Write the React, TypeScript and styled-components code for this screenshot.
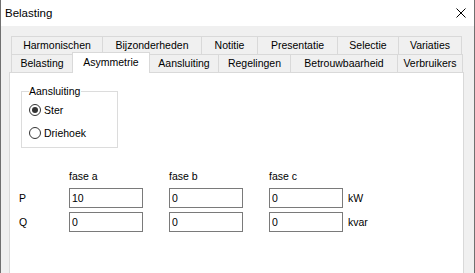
import { Fragment } from "react";
import styled, { createGlobalStyle } from "styled-components";

const Global = createGlobalStyle`
  body {
    margin: 0;
    background: #fff;
    font-family: "Liberation Sans", Arial, sans-serif;
    font-size: 10.5px;
    color: #000;
  }
`;

const Window = styled.div`
  width: 475px;
  height: 273px;
  box-sizing: border-box;
  border-left: 1px solid #707070;
  border-right: 1px solid #707070;
  display: flex;
  flex-direction: column;
  overflow: hidden;
`;

const TitleBar = styled.div`
  height: 26px;
  flex: none;
  background: #fff;
  display: flex;
  align-items: center;
  justify-content: space-between;
  padding: 0 8px 0 4px;
`;

const Title = styled.span`
  font-size: 11.5px;
  line-height: 14px;
`;

const Body = styled.div`
  flex: 1;
  min-height: 0;
  background: #f0f0f0;
  padding: 10px 10px 0 8px;
  display: flex;
  flex-direction: column;
`;

const TabStrip = styled.div`
  padding-left: 2px;
  display: flex;
  flex-direction: column;
`;

const TabRow = styled.div`
  display: flex;
  height: 18px;
  align-items: flex-end;
`;

const Tab = styled.div<{ $w: number; $last?: boolean; $active?: boolean }>`
  width: ${({ $w, $last, $active }) => $w + ($last || $active ? 1 : 0)}px;
  box-sizing: border-box;
  height: ${({ $active }) => ($active ? 21 : 18)}px;
  margin-bottom: ${({ $active }) => ($active ? -1 : 0)}px;
  margin-right: ${({ $active }) => ($active ? -1 : 0)}px;
  position: relative;
  z-index: ${({ $active }) => ($active ? 2 : 1)};
  background: ${({ $active }) => ($active ? "#fff" : "#f0f0f0")};
  border-top: 1px solid #d9d9d9;
  border-left: 1px solid #d9d9d9;
  border-right: ${({ $last, $active }) => ($last || $active ? "1px solid #d9d9d9" : "none")};
  display: flex;
  align-items: ${({ $active }) => ($active ? "flex-start" : "center")};
  padding-top: ${({ $active }) => ($active ? 3 : 0)}px;
  justify-content: center;
  line-height: 13px;
  white-space: nowrap;
`;

const Panel = styled.div`
  flex: 1;
  background: #fff;
  border: 1px solid #d9d9d9;
  border-bottom: none;
  padding: 12px 0 0 9px;
  display: flex;
  flex-direction: column;
  align-items: flex-start;
`;

const Group = styled.fieldset`
  width: 97px;
  box-sizing: border-box;
  margin: 0 0 0 2px;
  padding: 0 7px 6px;
  border: 1px solid #dcdcdc;
  min-width: 0;
`;

const Legend = styled.legend`
  padding: 0 1px 0 0;
  margin-left: 0;
  line-height: 13px;
`;

const RadioRow = styled.label<{ $first?: boolean }>`
  display: flex;
  align-items: center;
  gap: 3px;
  height: 16px;
  margin-top: ${({ $first }) => ($first ? 4 : 7)}px;
  line-height: 13px;
`;

const RadioDot = styled.span<{ $on?: boolean }>`
  width: 12px;
  height: 12px;
  box-sizing: border-box;
  border-radius: 50%;
  border: 1px solid #333;
  background: #fff;
  display: flex;
  align-items: center;
  justify-content: center;
  &::after {
    content: "";
    width: 6px;
    height: 6px;
    border-radius: 50%;
    background: ${({ $on }) => ($on ? "#333" : "transparent")};
  }
`;

const Grid = styled.div`
  margin-top: 21px;
  display: grid;
  grid-template-columns: 50px 100px 100px 79px auto;
  grid-template-rows: 15px 20px 20px;
  row-gap: 4px;
  align-items: center;
  line-height: 13px;
`;

const Field = styled.input`
  width: 74px;
  height: 20px;
  box-sizing: border-box;
  border: 1px solid #7a7a7a;
  padding: 0 2px;
  margin: 0;
  font: inherit;
  color: #000;
  background: #fff;
  outline: none;
`;

const topTabs: [string, number][] = [
  ["Harmonischen", 91],
  ["Bijzonderheden", 99],
  ["Notitie", 56],
  ["Presentatie", 80],
  ["Selectie", 61],
  ["Variaties", 63],
];

const bottomTabs: [string, number][] = [
  ["Belasting", 61],
  ["Asymmetrie", 77],
  ["Aansluiting", 69],
  ["Regelingen", 72],
  ["Betrouwbaarheid", 107],
  ["Verbruikers", 65],
];

const rows = [
  { label: "P", values: ["10", "0", "0"], unit: "kW" },
  { label: "Q", values: ["0", "0", "0"], unit: "kvar" },
];

export default function App() {
  return (
    <>
      <Global />
      <Window>
        <TitleBar>
          <Title>Belasting</Title>
          <svg width="10" height="10" viewBox="0 0 10 10">
            <path d="M0.5 0.5 L9.5 9.5 M9.5 0.5 L0.5 9.5" stroke="#000" strokeWidth="1" fill="none" />
          </svg>
        </TitleBar>
        <Body>
          <TabStrip>
            <TabRow>
              {topTabs.map(([t, w], i) => (
                <Tab key={t} $w={w} $last={i === topTabs.length - 1}>
                  {t}
                </Tab>
              ))}
            </TabRow>
            <TabRow>
              {bottomTabs.map(([t, w], i) => (
                <Tab
                  key={t}
                  $w={w}
                  $last={i === bottomTabs.length - 1}
                  $active={t === "Asymmetrie"}
                >
                  {t}
                </Tab>
              ))}
            </TabRow>
          </TabStrip>
          <Panel>
            <Group>
              <Legend>Aansluiting</Legend>
              <RadioRow $first>
                <RadioDot $on />
                Ster
              </RadioRow>
              <RadioRow>
                <RadioDot />
                Driehoek
              </RadioRow>
            </Group>
            <Grid>
              <span />
              <span>fase a</span>
              <span>fase b</span>
              <span>fase c</span>
              <span />
              {rows.map((r) => (
                <Fragment key={r.label}>
                  <span>{r.label}</span>
                  {r.values.map((v, i) => (
                    <Field key={i} readOnly value={v} />
                  ))}
                  <span>{r.unit}</span>
                </Fragment>
              ))}
            </Grid>
          </Panel>
        </Body>
      </Window>
    </>
  );
}
